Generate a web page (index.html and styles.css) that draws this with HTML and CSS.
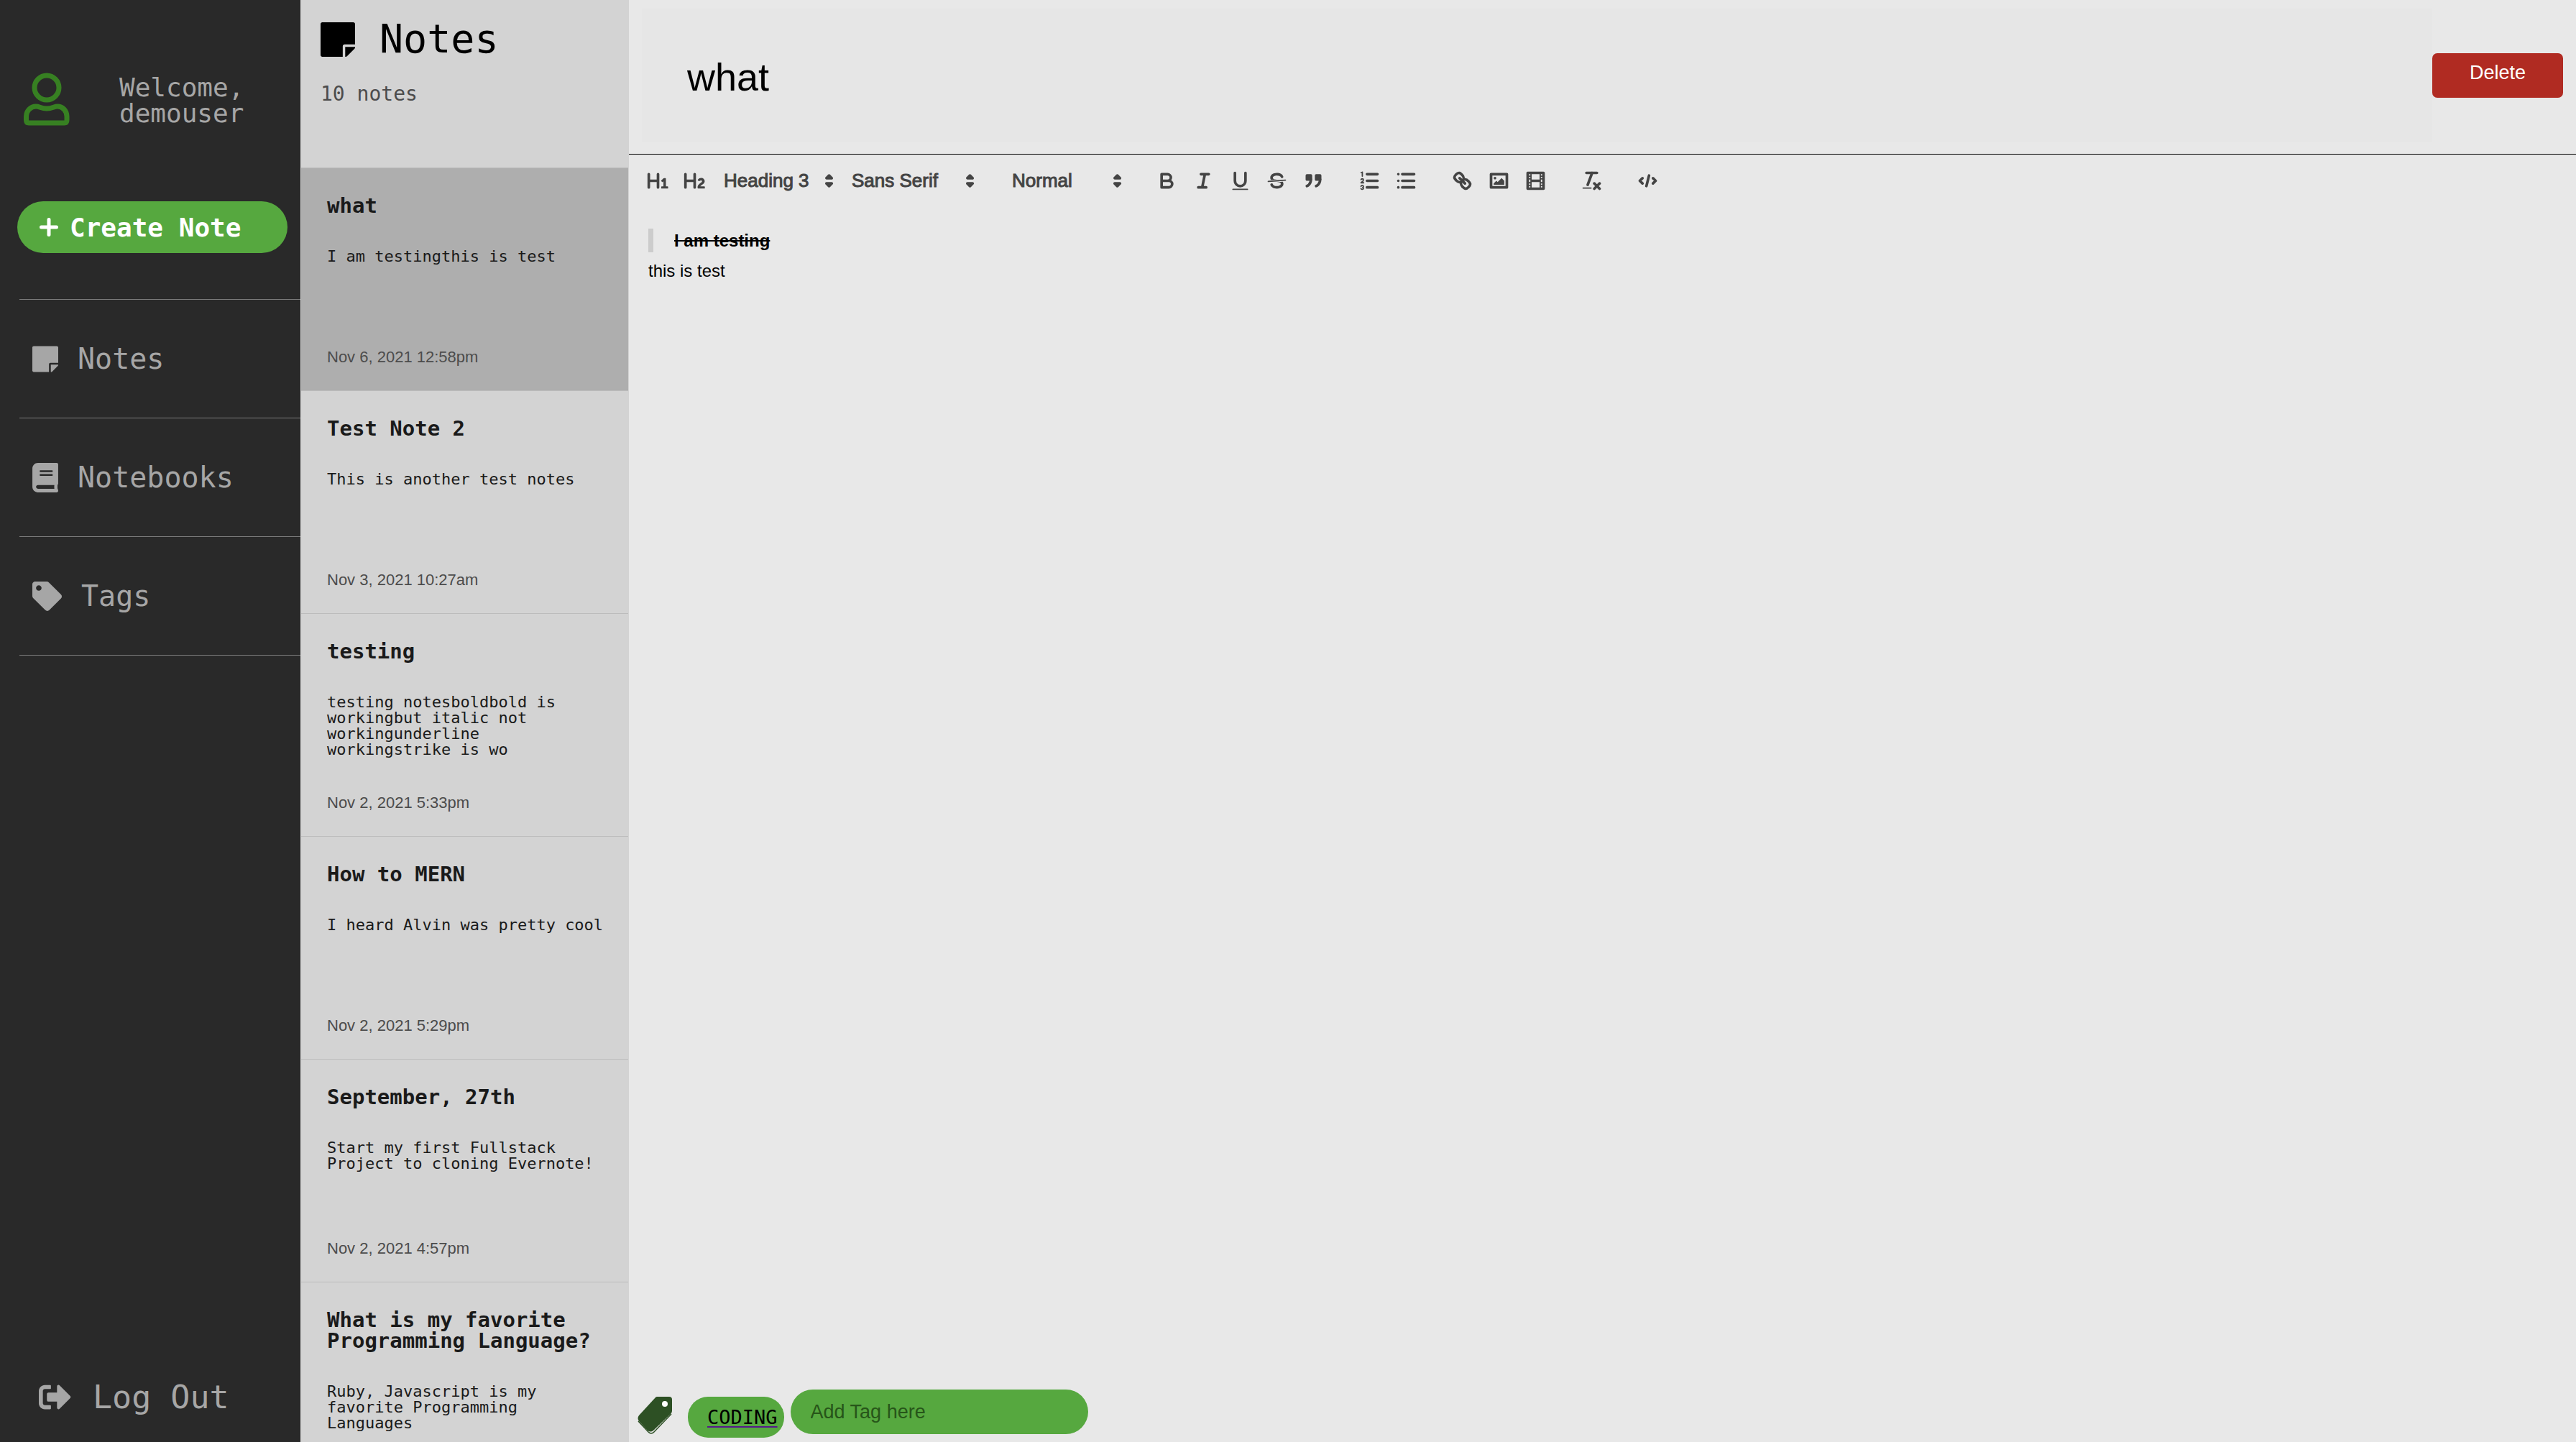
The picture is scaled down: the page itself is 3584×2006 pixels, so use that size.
FILE: index.html
```html
<!DOCTYPE html>
<html lang="en">
<head>
<meta charset="utf-8">
<title>Notes</title>
<link rel="stylesheet" href="styles.css">
</head>
<body>
<div class="app">
  <aside class="sidebar">
    <div class="profile">
      <svg class="profile-icon" viewBox="0 0 64 78" fill="none" stroke="currentColor" stroke-width="7" aria-hidden="true">
        <circle cx="32" cy="21" r="17"/>
        <path d="M7 70Q3.500 70 3.500 66V61C3.500 53 10 47 17 47C22 47 24 50 32 50C40 50 42 47 47 47C54 47 60 53 60 61V66Q60 70 56.500 70Z"/>
      </svg>
      <p class="welcome">Welcome,<br>demouser</p>
    </div>
    <button class="create" type="button">
      <svg class="plus" viewBox="0 0 26 26" fill="none" stroke="currentColor" stroke-width="5" stroke-linecap="round" aria-hidden="true"><path d="M13 2.500v21M2.500 13h21"/></svg>
      Create Note
    </button>
    <nav class="nav">
      <a class="nav-item" href="#notes">
        <svg class="nav-icon" viewBox="0 32 448 448" fill="currentColor" aria-hidden="true"><path d="M312 320h136V56c0-13.300-10.700-24-24-24H24C10.700 32 0 42.700 0 56v400c0 13.300 10.700 24 24 24h264V344c0-13.200 10.800-24 24-24zm129 55l-98 98c-4.500 4.500-10.600 7-17 7h-6V352h128v6.100c0 6.300-2.500 12.400-7 16.900z"/></svg>
        Notes
      </a>
      <a class="nav-item" href="#notebooks">
        <svg class="nav-icon" viewBox="0 0 448 512" fill="currentColor" aria-hidden="true"><path d="M448 360V24c0-13.300-10.700-24-24-24H96C43 0 0 43 0 96v320c0 53 43 96 96 96h328c13.300 0 24-10.700 24-24v-16c0-7.500-3.500-14.300-8.900-18.700-4.200-15.400-4.200-59.300 0-74.700 5.400-4.300 8.900-11.100 8.900-18.600zM128 134c0-3.300 2.700-6 6-6h212c3.300 0 6 2.700 6 6v20c0 3.300-2.700 6-6 6H134c-3.300 0-6-2.700-6-6v-20zm0 64c0-3.300 2.700-6 6-6h212c3.300 0 6 2.700 6 6v20c0 3.300-2.700 6-6 6H134c-3.300 0-6-2.700-6-6v-20zm253.400 250H96c-17.700 0-32-14.300-32-32 0-17.600 14.400-32 32-32h285.400c-1.900 17.100-1.900 46.900 0 64z"/></svg>
        Notebooks
      </a>
      <a class="nav-item" href="#tags">
        <svg class="nav-icon nav-icon-wide" viewBox="0 0 512 512" fill="currentColor" aria-hidden="true"><path d="M0 252.118V48C0 21.490 21.490 0 48 0h204.118a48 48 0 0 1 33.941 14.059l211.882 211.882c18.745 18.745 18.745 49.137 0 67.882L293.823 497.941c-18.745 18.745-49.137 18.745-67.882 0L14.059 286.059A48 48 0 0 1 0 252.118zM112 64c-26.510 0-48 21.490-48 48s21.490 48 48 48 48-21.490 48-48-21.490-48-48-48z"/></svg>
        Tags
      </a>
    </nav>
    <button class="logout" type="button">
      <svg class="logout-icon" viewBox="0 0 512 512" fill="currentColor" aria-hidden="true"><path d="M497 273L329 441c-15 15-41 4.500-41-17v-96H152c-13.300 0-24-10.700-24-24v-96c0-13.300 10.700-24 24-24h136V88c0-21.400 25.900-32 41-17l168 168c9.300 9.400 9.300 24.600 0 34zM192 436v-40c0-6.600-5.400-12-12-12H96c-17.700 0-32-14.300-32-32V160c0-17.700 14.300-32 32-32h84c6.600 0 12-5.400 12-12V76c0-6.600-5.400-12-12-12H96c-53 0-96 43-96 96v192c0 53 43 96 96 96h84c6.600 0 12-5.400 12-12z"/></svg>
      Log Out
    </button>
  </aside>

  <section class="list">
    <header class="list-head">
      <h1 class="list-title">
        <svg class="list-icon" viewBox="0 32 448 448" fill="currentColor" aria-hidden="true"><path d="M312 320h136V56c0-13.300-10.700-24-24-24H24C10.700 32 0 42.700 0 56v400c0 13.300 10.700 24 24 24h264V344c0-13.200 10.800-24 24-24zm129 55l-98 98c-4.500 4.500-10.600 7-17 7h-6V352h128v6.100c0 6.300-2.500 12.400-7 16.900z"/></svg>
        Notes
      </h1>
      <p class="list-count">10 notes</p>
    </header>
    <ul class="notes">
      <li class="note note-active">
        <h2 class="note-title">what</h2>
        <p class="note-text">I am testingthis is test</p>
        <time class="note-date">Nov 6, 2021 12:58pm</time>
      </li>
      <li class="note">
        <h2 class="note-title">Test Note 2</h2>
        <p class="note-text">This is another test notes</p>
        <time class="note-date">Nov 3, 2021 10:27am</time>
      </li>
      <li class="note">
        <h2 class="note-title">testing</h2>
        <p class="note-text">testing notesboldbold is workingbut italic not workingunderline workingstrike is wo</p>
        <time class="note-date">Nov 2, 2021 5:33pm</time>
      </li>
      <li class="note">
        <h2 class="note-title">How to MERN</h2>
        <p class="note-text">I heard Alvin was pretty cool</p>
        <time class="note-date">Nov 2, 2021 5:29pm</time>
      </li>
      <li class="note">
        <h2 class="note-title">September, 27th</h2>
        <p class="note-text">Start my first Fullstack Project to cloning Evernote!</p>
        <time class="note-date">Nov 2, 2021 4:57pm</time>
      </li>
      <li class="note">
        <h2 class="note-title">What is my favorite Programming Language?</h2>
        <p class="note-text">Ruby, Javascript is my favorite Programming Languages</p>
      </li>
    </ul>
  </section>

  <main class="editor">
    <header class="editor-head">
      <input class="title-input" type="text" value="what" aria-label="Title">
      <button class="delete" type="button">Delete</button>
    </header>

    <div class="toolbar">
      <div class="group">
        <button class="tool" type="button" aria-label="Heading 1"><svg viewBox="0 0 18 18"><path class="f" d="M10,4V14a1,1,0,0,1-2,0V10H3v4a1,1,0,0,1-2,0V4A1,1,0,0,1,3,4V8H8V4a1,1,0,0,1,2,0Zm6.06787,9.209H14.98975V7.59863a.54085.54085,0,0,0-.605-.60547h-.62744a1.01119,1.01119,0,0,0-.748.29688L11.645,8.56641a.5435.5435,0,0,0-.022.8584l.28613.30762a.53861.53861,0,0,0,.84717.0332l.09912-.08789a1.2137,1.2137,0,0,0,.2417-.35254h.02246s-.01123.30859-.01123.60547V13.209H12.041a.54085.54085,0,0,0-.605.60547v.43945a.54085.54085,0,0,0,.605.60547h4.02686a.54085.54085,0,0,0,.605-.60547v-.43945A.54085.54085,0,0,0,16.06787,13.209Z"/></svg></button>
        <button class="tool" type="button" aria-label="Heading 2"><svg viewBox="0 0 18 18"><path class="f" d="M16.73975,13.81445v.43945a.54085.54085,0,0,1-.605.60547H11.855a.58392.58392,0,0,1-.64893-.60547V14.0127c0-2.90527,3.39941-3.42187,3.39941-4.55469a.77675.77675,0,0,0-.84717-.78125,1.17684,1.17684,0,0,0-.83594.38477c-.2749.26367-.561.374-.85791.13184l-.4292-.34082c-.30811-.24219-.38525-.51758-.1543-.81445a2.97155,2.97155,0,0,1,2.45361-1.17676,2.45393,2.45393,0,0,1,2.68408,2.40918c0,2.45312-3.1792,2.92676-3.27832,3.93848h2.79443A.54085.54085,0,0,1,16.73975,13.81445ZM9,3A.99974.99974,0,0,0,8,4V8H3V4A1,1,0,0,0,1,4V14a1,1,0,0,0,2,0V10H8v4a1,1,0,0,0,2,0V4A.99974.99974,0,0,0,9,3Z"/></svg></button>
        <label class="picker">
          <select class="picker-select" aria-label="Heading level"><option>Heading 3</option><option>Normal</option></select>
          <svg class="picker-arrow" viewBox="0 0 18 18"><path class="sf" d="M7 11L9 13L11 11ZM7 7L9 5L11 7Z"/></svg>
        </label>
        <label class="picker picker-font">
          <select class="picker-select" aria-label="Font"><option>Sans Serif</option><option>Serif</option></select>
          <svg class="picker-arrow" viewBox="0 0 18 18"><path class="sf" d="M7 11L9 13L11 11ZM7 7L9 5L11 7Z"/></svg>
        </label>
      </div>
      <div class="group">
        <label class="picker">
          <select class="picker-select" aria-label="Size"><option>Normal</option><option>Large</option></select>
          <svg class="picker-arrow" viewBox="0 0 18 18"><path class="sf" d="M7 11L9 13L11 11ZM7 7L9 5L11 7Z"/></svg>
        </label>
      </div>
      <div class="group">
        <button class="tool" type="button" aria-label="Bold"><svg viewBox="0 0 18 18"><path class="s" d="M5,4H9.500A2.500,2.500,0,0,1,12,6.500A2.500,2.500,0,0,1,9.500,9H5ZM5,9h5.500A2.500,2.500,0,0,1,13,11.500A2.500,2.500,0,0,1,10.500,14H5Z"/></svg></button>
        <button class="tool" type="button" aria-label="Italic"><svg viewBox="0 0 18 18"><path class="s" d="M7 4H13M5 14H11M8 14L10 4"/></svg></button>
        <button class="tool" type="button" aria-label="Underline"><svg viewBox="0 0 18 18"><path class="s" d="M5,3V9a4,4,0,0,0,8,0V3"/><rect class="f" x="3" y="15" width="12" height="1" rx="0.5"/></svg></button>
        <button class="tool" type="button" aria-label="Strike"><svg viewBox="0 0 18 18"><path class="s thin" d="M15.500 8.500L2.500 9.500"/><path class="f" d="M9.007,8C6.542,7.791,6,7.519,6,6.500,6,5.792,7.283,5,9,5c1.571,0,2.765.679,2.969,1.309a1,1,0,0,0,1.900-.617C13.356,4.106,11.354,3,9,3,6.200,3,4,4.538,4,6.500a3.200,3.200,0,0,0,.5,1.843Z"/><path class="f" d="M8.984,10C11.457,10.208,12,10.479,12,11.500c0,.708-1.283,1.500-3,1.500-1.571,0-2.765-.679-2.969-1.309a1,1,0,1,0-1.900.617C4.644,13.894,6.646,15,9,15c2.800,0,5-1.538,5-3.500a3.200,3.200,0,0,0-.5-1.843Z"/></svg></button>
        <button class="tool" type="button" aria-label="Blockquote"><svg viewBox="0 0 18 18"><path class="sf" d="M4 5h3v3h-3zM11 5h3v3h-3z"/><path class="sf" d="M7,8c0,4.031-3,5-3,5M14,8c0,4.031-3,5-3,5"/></svg></button>
      </div>
      <div class="group">
        <button class="tool" type="button" aria-label="Ordered list"><svg viewBox="0 0 18 18"><path class="s" d="M7 4H15M7 9H15M7 14H15"/><path class="f" d="M3.500,6A0.500,0.500,0,0,1,3,5.500V3.085l-0.276.138A0.500,0.500,0,0,1,2.053,3c-0.124-.247-0.023-0.324.224-0.447l1-.5A0.500,0.500,0,0,1,4,2.500v3A0.500,0.500,0,0,1,3.500,6Z"/><path class="s thin" d="M4.500,10.500h-2c0-.234,1.850-1.076,1.850-2.234A0.959,0.959,0,0,0,2.500,8.156M2.500,14.846a0.959,0.959,0,0,0,1.850-.109A0.700,0.700,0,0,0,3.750,14a0.688,0.688,0,0,0,.6-0.736,0.959,0.959,0,0,0-1.850-.109"/></svg></button>
        <button class="tool" type="button" aria-label="Bullet list"><svg viewBox="0 0 18 18"><path class="s" d="M6 4H15M6 9H15M6 14H15M3 4H3M3 9H3M3 14H3"/></svg></button>
      </div>
      <div class="group">
        <button class="tool" type="button" aria-label="Link"><svg viewBox="0 0 18 18"><path class="s" d="M7 7L11 11M8.900,4.577a3.476,3.476,0,0,1,.36,4.679A3.476,3.476,0,0,1,4.577,8.900C3.185,7.500,2.035,6.400,4.217,4.217S7.500,3.185,8.900,4.577ZM13.423,9.100a3.476,3.476,0,0,0-4.679-.36,3.476,3.476,0,0,0,.36,4.679c1.392,1.392,2.500,2.542,4.679.36S14.815,10.500,13.423,9.100Z"/></svg></button>
        <button class="tool" type="button" aria-label="Image"><svg viewBox="0 0 18 18"><rect class="s" x="3" y="4" width="12" height="10"/><circle class="f" cx="6" cy="7" r="1"/><path class="f" d="M5 12V11L7 9L8 10L11 7L13 9V12Z"/></svg></button>
        <button class="tool" type="button" aria-label="Video"><svg viewBox="0 0 18 18"><rect class="s" x="3" y="3" width="12" height="12"/><path class="f" d="M5 3h1v12h-1zM12 3h1v12h-1zM5 8h8v2h-8zM3 5h3v1h-3zM3 7h3v1h-3zM3 10h3v1h-3zM3 12h3v1h-3zM12 5h3v1h-3zM12 7h3v1h-3zM12 10h3v1h-3zM12 12h3v1h-3z"/></svg></button>
      </div>
      <div class="group">
        <button class="tool" type="button" aria-label="Clear formatting"><svg viewBox="0 0 18 18"><path class="s" d="M5 3H13M6 12L9.350 3M11 11L15 15M15 11L11 15"/><rect class="f" x="2" y="14" width="7" height="1" rx="0.5"/></svg></button>
      </div>
      <div class="group">
        <button class="tool" type="button" aria-label="Code"><svg viewBox="0 0 18 18"><path class="s" d="M5 7L3 9L5 11M13 7L15 9L13 11M10 5L8 13"/></svg></button>
      </div>
    </div>

    <div class="content" contenteditable="true" spellcheck="false">
      <blockquote class="quote"><s>I am testing</s></blockquote>
      <p class="para">this is test</p>
    </div>

    <footer class="tags">
      <svg class="tags-icon" viewBox="0 0 48 52" aria-hidden="true">
        <path fill="none" stroke="#2d5024" stroke-width="1.500" d="M1 34L15 49Q19 53 23 49L47 24"/>
        <path fill="#2d5024" d="M27 0H44Q48 0 48 4V20Q48 22 46 24L22 47Q18 50 14 47L2 34Q-1 30 2 26L25 1Q26 0 27 0Z"/>
        <circle cx="38" cy="10" r="4" fill="#fff"/>
      </svg>
      <span class="tag"><a class="tag-link" href="#coding">CODING</a></span>
      <input class="tag-input" type="text" placeholder="Add Tag here" aria-label="Add tag">
    </footer>
  </main>
</div>
</body>
</html>
```
FILE: styles.css
```css
* {
  box-sizing: border-box;
  margin: 0;
  padding: 0;
}

body {
  font-family: "DejaVu Sans Mono", "Liberation Mono", monospace;
  color: #1a1a1a;
  background: #e8e8e8;
}

button,
input,
select {
  font: inherit;
  color: inherit;
  border: 0;
  background: none;
}

svg {
  flex: none;
}

.app {
  display: grid;
  grid-template-columns: 418px 457px minmax(0, 1fr);
  height: 100vh;
}

/* Sidebar */

.sidebar {
  display: flex;
  flex-direction: column;
  padding-top: 101px;
  padding-bottom: 36px;
  color: #a6a6a6;
  background: #292929;
}

.profile {
  display: flex;
  align-items: center;
  gap: 69px;
  padding-left: 33px;
}

.profile-icon {
  width: 64px;
  height: 78px;
  color: #378022;
}

.welcome {
  font-size: 36px;
  line-height: 36px;
}

.create {
  display: flex;
  align-items: center;
  gap: 16px;
  height: 72px;
  margin: 101px 18px 0 24px;
  padding-left: 31px;
  border-radius: 36px;
  font-size: 36px;
  font-weight: bold;
  color: #fff;
  background: #56a83f;
}

.plus {
  width: 26px;
  height: 26px;
}

.nav {
  margin: 64px 0 auto 27px;
  border-top: 1px solid #7c7c7c;
}

.nav-item {
  display: flex;
  align-items: center;
  gap: 27px;
  height: 165px;
  padding-left: 18px;
  border-bottom: 1px solid #7c7c7c;
  font-size: 40px;
  color: inherit;
  text-decoration: none;
}

.nav-icon {
  width: 36px;
  height: 41px;
}

.nav-icon-wide {
  width: 41px;
}

.logout {
  display: flex;
  align-items: center;
  gap: 30px;
  padding-left: 54px;
  font-size: 45px;
}

.logout-icon {
  width: 45px;
  height: 45px;
}

/* Note list */

.list {
  display: flex;
  flex-direction: column;
  min-height: 0;
  overflow: hidden;
  padding: 0 1px;
  background: #d3d3d3;
}

.list-head {
  flex: none;
  height: 233px;
  padding: 27px 27px 0;
  color: #000;
}

.list-title {
  display: flex;
  align-items: center;
  gap: 34px;
  font-size: 55px;
  font-weight: normal;
  line-height: 55px;
}

.list-icon {
  width: 48px;
  height: 48px;
}

.list-count {
  margin-top: 35px;
  font-size: 28px;
  line-height: 28px;
  color: #4c4c4c;
}

.notes {
  list-style: none;
}

.note {
  display: flex;
  flex-direction: column;
  height: 310px;
  padding: 38px 30px 35px 36px;
  border-top: 1px solid #bcbcbc;
}

.note-active {
  background: #aeaeae;
}

.note-title {
  margin-bottom: 45px;
  font-size: 29px;
  line-height: 29px;
}

.note-text {
  font-size: 22px;
  line-height: 22px;
}

.note-date {
  margin-top: auto;
  font-family: "Liberation Sans", Arial, sans-serif;
  font-size: 22px;
  line-height: 22px;
  color: #4c4c4c;
}

/* Editor */

.editor {
  display: flex;
  flex-direction: column;
  min-height: 0;
  font-family: "Liberation Sans", Arial, sans-serif;
}

.editor-head {
  display: flex;
  align-items: center;
  padding: 12px 18px 16px;
  border-bottom: 1px solid #000;
}

.title-input {
  flex: 1;
  height: 186px;
  padding: 4px 63px 0;
  font-size: 54px;
  color: #000;
  background: #e6e6e6;
}

.delete {
  width: 182px;
  height: 62px;
  padding-bottom: 8px;
  border-radius: 7px;
  font-size: 27px;
  color: #fff;
  background: #b02b22;
}

.toolbar {
  display: flex;
  gap: 27px;
  padding: 14px 15px 14px;
  color: #444;
}

.group {
  display: flex;
}

.tool {
  display: flex;
  align-items: center;
  justify-content: center;
  width: 51px;
  height: 44px;
}

.tool svg,
.picker-arrow {
  width: 33px;
  height: 33px;
}

.f {
  fill: #444;
}

.s,
.sf {
  fill: none;
  stroke: #444;
  stroke-width: 2;
  stroke-linecap: round;
  stroke-linejoin: round;
}

.sf {
  fill: #444;
}

.thin {
  stroke-width: 1;
}

.picker {
  display: grid;
  align-items: center;
  width: 178px;
  height: 44px;
}

.picker-font {
  width: 196px;
}

.picker-select,
.picker-arrow {
  grid-area: 1 / 1;
}

.picker-select {
  appearance: none;
  padding-left: 15px;
  font-size: 26px;
  -webkit-text-stroke: 1px #444;
}

.picker-arrow {
  justify-self: end;
  pointer-events: none;
}

.content {
  flex: 1;
  padding: 22px 27px;
  font-size: 24px;
  line-height: 33px;
  color: #000;
  outline: none;
}

.quote {
  margin: 9px 0;
  padding-left: 29px;
  border-left: 7px solid #ccc;
  font-weight: bold;
}

/* Tags */

.tags {
  display: flex;
  align-items: flex-start;
  padding: 0 12px 6px;
}

.tags-icon {
  width: 48px;
  height: 52px;
  margin: 10px 22px 0 0;
}

.tag {
  display: flex;
  align-items: center;
  height: 57px;
  margin: 10px 9px 0 0;
  padding: 0 9px 0 27px;
  border-radius: 28px;
  font-family: "DejaVu Sans Mono", "Liberation Mono", monospace;
  font-size: 27px;
  background: #56a83f;
}

.tag-link {
  color: #000;
  text-decoration: underline 2px #551a8b;
  text-underline-offset: 3px;
}

.tag-input {
  width: 414px;
  height: 62px;
  padding: 0 28px;
  border-radius: 31px;
  font-size: 27px;
  background: #56a83f;
}

.tag-input::placeholder {
  color: #275519;
  opacity: 1;
}
```
